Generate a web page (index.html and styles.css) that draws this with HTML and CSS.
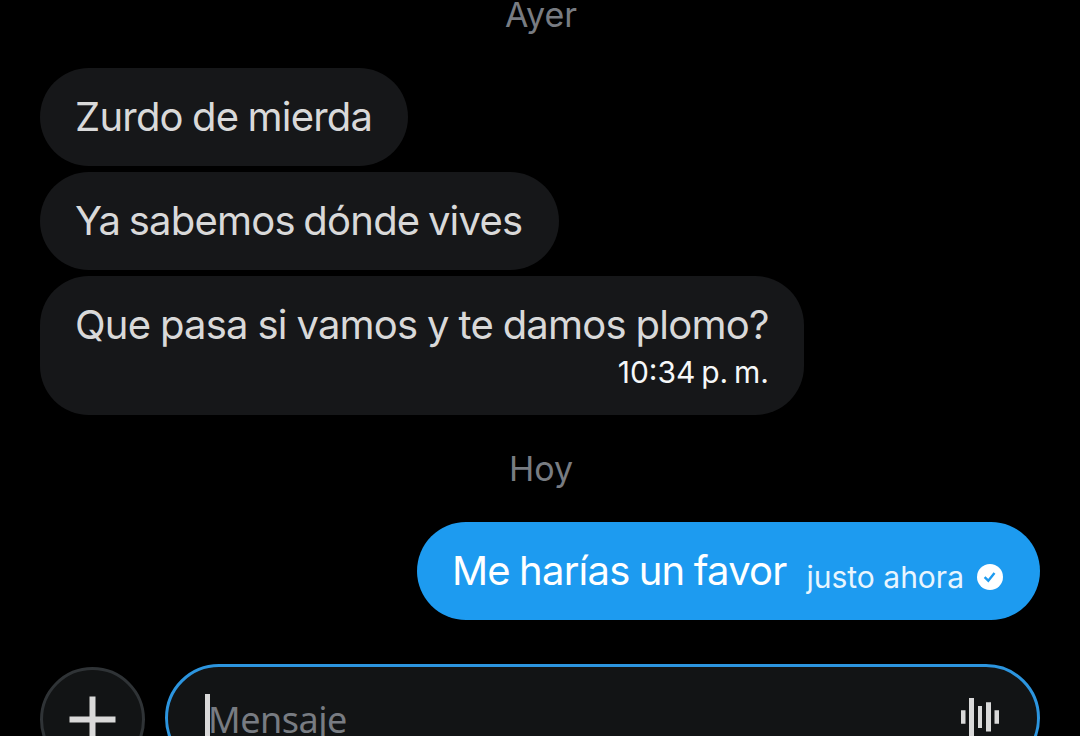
FILE: index.html
```html
<!DOCTYPE html>
<html lang="es">
<head>
<meta charset="utf-8">
<title>Mensajes</title>
<link rel="stylesheet" href="styles.css">
</head>
<body>
<main class="chat">
  <div class="day day-first">Ayer</div>
  <section class="received">
    <div class="bubble"><span class="text">Zurdo de mierda</span></div>
    <div class="bubble"><span class="text">Ya sabemos dónde vives</span></div>
    <div class="bubble last">
      <span class="text">Que pasa si vamos y te damos plomo?</span>
      <time class="time">10:34 p. m.</time>
    </div>
  </section>
  <div class="day day-second">Hoy</div>
  <section class="sent">
    <div class="bubble own">
      <span class="text">Me harías un favor</span>
      <span class="status">justo ahora</span>
      <svg class="check" viewBox="0 0 26 26"><circle cx="13" cy="13" r="13" fill="#fff"/><path d="M7.6 13.2l3.7 3.5 6.2-7.8" fill="none" stroke="#1d9bf0" stroke-width="2.4"/></svg>
    </div>
  </section>
  <footer class="composer">
    <button class="add" aria-label="Adjuntar"><svg width="47" height="47" viewBox="0 0 47 47"><path d="M23.5 0.5v46M0.5 23.5h46" stroke="#d9d9d9" stroke-width="6"/></svg></button>
    <div class="field">
      <span class="caret"></span>
      <span class="placeholder">Mensaje</span>
      <svg class="wave" width="38" height="38" viewBox="0 0 38 38" fill="#d9d9d9"><path d="M0 12.3h4.5v13.4H0zM8 0h5v38H8zM17 8h4v22h-4zM25 4.2h5v29.3h-5zM33.5 12.3H38v13.4h-4.5z"/></svg>
    </div>
  </footer>
</main>
</body>
</html>
```

FILE: styles.css
```css
* { box-sizing: border-box; }
html, body { margin: 0; height: 100%; background: #000; overflow: hidden; }
.chat {
  display: flex;
  flex-direction: column;
  height: 736px;
  padding: 0 40px;
  overflow: hidden;
  font-family: Inter, Roboto, sans-serif;
}
.chat > * { flex: none; }
.day { text-align: center; color: #787c82; font-size: 34px; white-space: nowrap; }
.day-first { height: 68px; line-height: 29px; padding-left: 2px; }
.day-second { height: 107px; line-height: 107px; padding-left: 2px; }
.received { display: flex; flex-direction: column; align-items: flex-start; gap: 6px; }
.bubble {
  display: flex;
  align-items: center;
  height: 98px;
  width: 368px;
  padding: 0 35px;
  border-radius: 49px;
  background: #161719;
  color: #d9d9d9;
  white-space: nowrap;
}
.bubble:nth-child(2) { width: 519px; }
.bubble.last {
  flex-direction: column;
  align-items: flex-start;
  width: 764px;
  height: 139px;
  padding: 25px 35px;
}
.text { font-size: 40px; line-height: 48px; letter-spacing: -0.77px; word-spacing: -1.3px; }
.bubble:nth-child(2) .text { word-spacing: -2px; }
.bubble.last .text { word-spacing: -0.8px; }
.time { align-self: flex-end; margin-top: 5px; font-size: 30px; line-height: 36px; word-spacing: -2.6px; color: #f5f7f8; }
.sent { display: flex; justify-content: flex-end; }
.bubble.own { width: 623px; background: #1d9bf0; color: #fff; }
.status { margin: 12px 0 0 auto; font-size: 30px; line-height: 36px; color: #e8f5fe; }
.check { width: 26px; height: 26px; margin: 12px 2px 0 13px; }
.composer { display: flex; gap: 20px; padding-top: 44px; }
.add {
  display: grid;
  place-items: center;
  width: 105px;
  height: 105px;
  margin: 3px 0 0;
  padding: 0;
  border: 3px solid #2f3336;
  border-radius: 50%;
  background: #121415;
}
.field {
  display: flex;
  align-items: center;
  flex: 1;
  height: 108px;
  padding: 0 38px 0 37px;
  border: 3px solid #2c95df;
  border-radius: 54px;
  background: #121415;
}
.caret { width: 5px; height: 48px; background: #d9d9d9; }
.placeholder { margin: 4px 0 0 -2px; font: 36px/48px "Noto Sans", sans-serif; letter-spacing: -0.5px; color: #787c82; }
.wave { margin-left: auto; margin-bottom: 2px; }
```
